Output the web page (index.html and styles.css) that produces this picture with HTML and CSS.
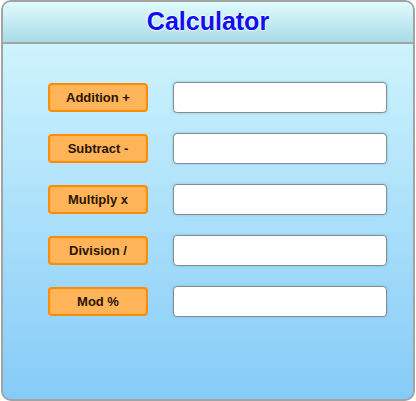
FILE: index.html
```html
<!DOCTYPE html>
<html>
<head>
<meta charset="utf-8">
<link rel="stylesheet" href="styles.css">
</head>
<body>
<div class="calc">
  <div class="header"><h1 class="title">Calculator</h1></div>
  <div class="content">
    <div class="row"><button class="op">Addition +</button><input class="field" type="text"></div>
    <div class="row"><button class="op">Subtract -</button><input class="field" type="text"></div>
    <div class="row"><button class="op">Multiply x</button><input class="field" type="text"></div>
    <div class="row"><button class="op">Division /</button><input class="field" type="text"></div>
    <div class="row"><button class="op">Mod %</button><input class="field" type="text"></div>
  </div>
</div>
</body>
</html>
```

FILE: styles.css
```css
html, body {
  margin: 0;
  padding: 0;
  background: #ffffff;
  font-family: "Liberation Sans", Arial, sans-serif;
}
.calc {
  box-sizing: border-box;
  margin: 0 1px;
  height: 401px;
  border: 2px solid #a3a3a3;
  border-radius: 10px;
  overflow: hidden;
  display: flex;
  flex-direction: column;
  background: linear-gradient(to bottom, #d6f8fd 0%, #86cbf8 100%);
}
.header {
  height: 40px;
  border-bottom: 2px solid #a6a6a6;
  background: linear-gradient(to bottom, #e0fbfd 0%, #a9dbe7 100%);
  display: flex;
  align-items: center;
  justify-content: center;
}
.title {
  margin: 0;
  font-size: 25px;
  font-weight: bold;
  color: #1010ee;
  text-shadow: 0 0 2px #ffffff, 0 0 3px #ffffff;
  line-height: 1;
  position: relative;
  top: -1px;
}
.content {
  padding-top: 38px;
  display: flex;
  flex-direction: column;
  gap: 21px;
}
.row {
  display: flex;
  align-items: center;
  padding-left: 45px;
  gap: 25px;
  height: 30px;
}
.op {
  box-sizing: border-box;
  width: 100px;
  height: 29px;
  background: #ffb45a;
  border: 2px solid #ff8c00;
  border-radius: 4px;
  font-family: "Liberation Sans", Arial, sans-serif;
  font-size: 13px;
  font-weight: bold;
  color: #2a1400;
  padding: 0;
}
.field {
  box-sizing: border-box;
  width: 214px;
  height: 31px;
  background: #ffffff;
  border: 1px solid #8a8a8a;
  border-radius: 4px;
  box-shadow: 0 0 3px rgba(100, 180, 220, 0.6);
  padding: 0;
}
```
